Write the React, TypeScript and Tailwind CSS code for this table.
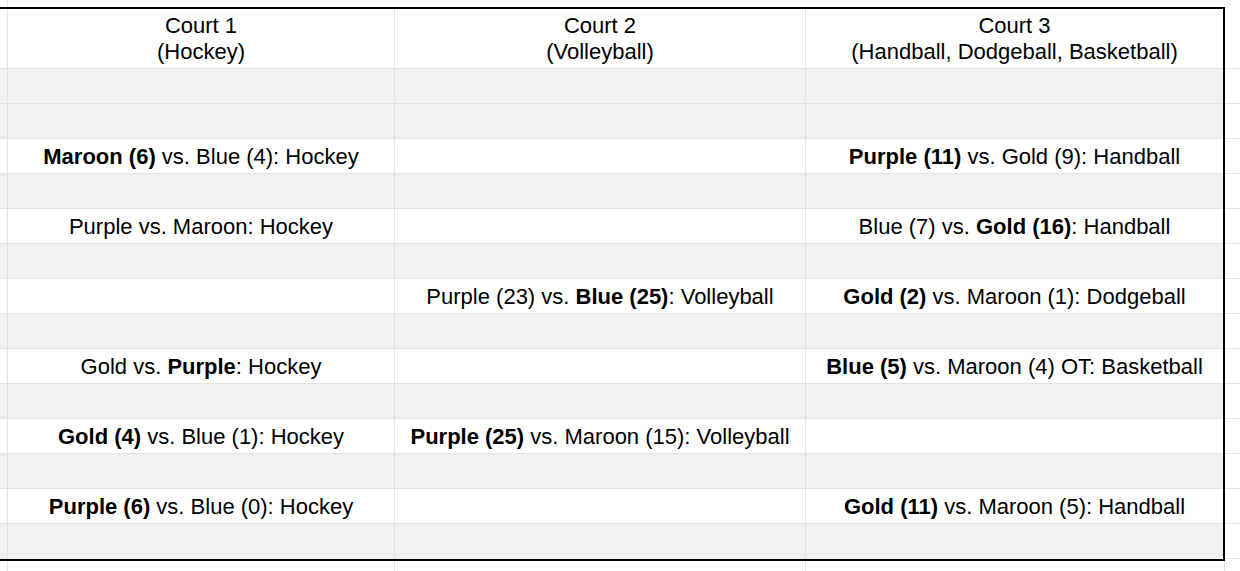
import React from 'react';

type Seg = { t: string; b?: boolean };
type Row = { white: boolean; cells: [Seg[], Seg[], Seg[]] };

const e: Seg[] = [];

const rows: Row[] = [
  { white: false, cells: [e, e, e] },
  { white: false, cells: [e, e, e] },
  {
    white: true,
    cells: [
      [{ t: 'Maroon (6)', b: true }, { t: ' vs. Blue (4): Hockey' }],
      e,
      [{ t: 'Purple (11)', b: true }, { t: ' vs. Gold (9): Handball' }],
    ],
  },
  { white: false, cells: [e, e, e] },
  {
    white: true,
    cells: [
      [{ t: 'Purple vs. Maroon: Hockey' }],
      e,
      [{ t: 'Blue (7) vs. ' }, { t: 'Gold (16)', b: true }, { t: ': Handball' }],
    ],
  },
  { white: false, cells: [e, e, e] },
  {
    white: true,
    cells: [
      e,
      [{ t: 'Purple (23) vs. ' }, { t: 'Blue (25)', b: true }, { t: ': Volleyball' }],
      [{ t: 'Gold (2)', b: true }, { t: ' vs. Maroon (1): Dodgeball' }],
    ],
  },
  { white: false, cells: [e, e, e] },
  {
    white: true,
    cells: [
      [{ t: 'Gold vs. ' }, { t: 'Purple', b: true }, { t: ': Hockey' }],
      e,
      [{ t: 'Blue (5)', b: true }, { t: ' vs. Maroon (4) OT: Basketball' }],
    ],
  },
  { white: false, cells: [e, e, e] },
  {
    white: true,
    cells: [
      [{ t: 'Gold (4)', b: true }, { t: ' vs. Blue (1): Hockey' }],
      [{ t: 'Purple (25)', b: true }, { t: ' vs. Maroon (15): Volleyball' }],
      e,
    ],
  },
  { white: false, cells: [e, e, e] },
  {
    white: true,
    cells: [
      [{ t: 'Purple (6)', b: true }, { t: ' vs. Blue (0): Hockey' }],
      e,
      [{ t: 'Gold (11)', b: true }, { t: ' vs. Maroon (5): Handball' }],
    ],
  },
  { white: false, cells: [e, e, e] },
];

const widths = ['w-[387px]', 'w-[411px]', 'w-[417px]'];

function Text({ segs }: { segs: Seg[] }) {
  return (
    <span className="whitespace-pre">
      {segs.map((s, i) => (
        <span key={i} className={s.b ? 'font-bold' : ''}>
          {s.t}
        </span>
      ))}
    </span>
  );
}

export default function App() {
  return (
    <div
      className="w-[1240px] h-[571px] overflow-hidden bg-white text-black text-[22px]"
      style={{ fontFamily: '"Liberation Sans", Arial, sans-serif' }}
    >
      {/* top strip */}
      <div className="h-[7px] flex">
        <div className="w-[8px] border-r border-[#e2e2e2]" />
      </div>

      <div className="flex">
        <div className="w-[1225px] border-t-2 border-b-2 border-r-2 border-black">
          {/* header */}
          <div className="flex h-[60px] border-b border-[#e2e2e2] leading-[26px]">
            <div className="w-[8px] border-r border-[#e2e2e2]" />
            <div className="w-[387px] border-r border-[#e2e2e2] flex flex-col items-center justify-center">
              <div>Court 1</div>
              <div>(Hockey)</div>
            </div>
            <div className="w-[411px] border-r border-[#e2e2e2] flex flex-col items-center justify-center">
              <div>Court 2</div>
              <div>(Volleyball)</div>
            </div>
            <div className="w-[417px] flex flex-col items-center justify-center">
              <div>Court 3</div>
              <div>(Handball, Dodgeball, Basketball)</div>
            </div>
          </div>

          {rows.map((r, i) => (
            <div
              key={i}
              className={`flex h-[35px] ${i < rows.length - 1 ? 'border-b' : ''} border-[#e2e2e2] ${
                r.white ? 'bg-white' : 'bg-[#f1f1f1]'
              }`}
            >
              <div className="w-[8px] border-r border-[#e2e2e2]" />
              {r.cells.map((c, j) => (
                <div
                  key={j}
                  className={`${widths[j]} ${j < 2 ? 'border-r border-[#e2e2e2]' : ''} flex items-center justify-center`}
                >
                  <Text segs={c} />
                </div>
              ))}
            </div>
          ))}
        </div>

        {/* right filler */}
        <div className="flex-1">
          <div className="h-[62px] border-b border-[#e2e2e2]" />
          {rows.map((_, i) => (
            <div key={i} className="h-[35px] border-b border-[#e2e2e2]" />
          ))}
        </div>
      </div>

      {/* bottom strip */}
      <div className="flex h-[12px]">
        <div className="w-[8px] border-r border-[#e2e2e2]" />
        <div className="w-[387px] border-r border-[#e2e2e2]" />
        <div className="w-[411px] border-r border-[#e2e2e2]" />
        <div className="w-[419px] border-r border-[#e2e2e2]" />
      </div>
    </div>
  );
}
